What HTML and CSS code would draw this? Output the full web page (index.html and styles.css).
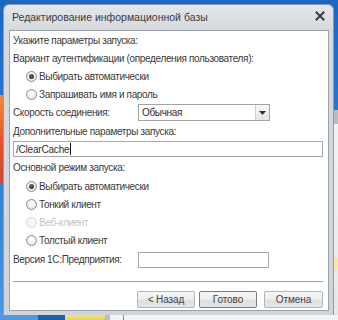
FILE: index.html
```html
<!DOCTYPE html>
<html lang="ru">
<head>
<meta charset="utf-8">
<title>Редактирование информационной базы</title>
<link rel="stylesheet" href="styles.css">
</head>
<body>
<div class="window">
  <div class="titlebar">
    <span class="title">Редактирование информационной базы</span>
    <svg class="close" width="10" height="10" viewBox="0 0 10 10"><path d="M1.5 1.5 L8.5 8.5 M8.5 1.5 L1.5 8.5" stroke="#3a3a3a" stroke-width="2" stroke-linecap="square"/></svg>
  </div>
  <div class="client">
    <div class="row r1">Укажите параметры запуска:</div>
    <div class="row r2">Вариант аутентификации (определения пользователя):</div>
    <div class="row radio-row r3"><span class="radio checked"></span>Выбирать автоматически</div>
    <div class="row radio-row r4"><span class="radio"></span>Запрашивать имя и пароль</div>
    <div class="row field-row r5">
      <span class="field-label">Скорость соединения:</span>
      <div class="select"><span class="select-text">Обычная</span><span class="drop"><svg width="7" height="4" viewBox="0 0 7 4"><path d="M0 0 H7 L3.5 4 Z" fill="#333"/></svg></span></div>
    </div>
    <div class="row r6">Дополнительные параметры запуска:</div>
    <div class="input wide"><span>/ClearCache</span><span class="caret"></span></div>
    <div class="row r8">Основной режим запуска:</div>
    <div class="row radio-row r9"><span class="radio checked"></span>Выбирать автоматически</div>
    <div class="row radio-row r10"><span class="radio"></span>Тонкий клиент</div>
    <div class="row radio-row r11 disabled"><span class="radio"></span>Веб-клиент</div>
    <div class="row radio-row r12"><span class="radio"></span>Толстый клиент</div>
    <div class="row field-row r13">
      <span class="field-label">Версия 1С:Предприятия:</span>
      <div class="input version"></div>
    </div>
    <div class="separator"></div>
    <div class="buttons">
      <button class="btn">&lt; Назад</button>
      <button class="btn default">Готово</button>
      <button class="btn cancel">Отмена</button>
    </div>
  </div>
</div>
</body>
</html>
```
FILE: styles.css
```css
html, body {
  margin: 0;
  padding: 0;
}
body {
  width: 338px;
  height: 320px;
  overflow: hidden;
  font-family: "Liberation Sans", Arial, sans-serif;
  font-size: 10px;
  letter-spacing: -0.35px;
  color: #3a3a3a;
  background:
    linear-gradient(#f3e47a, #e6d25c) 65px 315px / 40px 5px no-repeat,
    linear-gradient(#8a9096, #8a9096) 123px 315px / 1px 5px no-repeat,
    linear-gradient(#b9bec3, #b9bec3) 105px 315px / 5px 5px no-repeat,
    linear-gradient(#f3f4f5, #f3f4f5) 110px 315px / 228px 5px no-repeat,
    linear-gradient(#1c5fae, #1c5fae) 38px 315px / 27px 5px no-repeat,
    linear-gradient(#f4e9a8, #f4e9a8) 334px 257px / 4px 12px no-repeat,
    linear-gradient(#b9bdc2, #b9bdc2) 334px 110px / 4px 14px no-repeat,
    linear-gradient(#f1f2f3, #e6e8ea) 334px 124px / 4px 191px no-repeat,
    linear-gradient(180deg, #f08a3a, #e0502a 60%, #c84a3a) 0 95px / 3px 88px no-repeat,
    linear-gradient(180deg, #1d67c2 0%, #2a78cf 40%, #3d8bd9 80%, #4e9ade 100%);
}

.window {
  box-sizing: border-box;
  width: 331px;
  height: 311px;
  margin: 4px 0 0 3px;
  border: 1px solid #8e9aa6;
  border-bottom: none;
  border-radius: 6px 6px 0 0;
  background: linear-gradient(180deg, #e3e6ea 0px, #d6dadf 25px, #cfd4d9 100%);
  padding: 0 4px 4px 5px;
  display: flex;
  flex-direction: column;
}

.titlebar {
  height: 25px;
  display: flex;
  align-items: center;
  justify-content: space-between;
  padding: 0 4px 0 3px;
  flex-shrink: 0;
}
.title {
  font-size: 10.5px;
  letter-spacing: 0;
  color: #3c3c3c;
  margin-top: -2px;
}
.close {
  margin-top: -3px;
}

.client {
  flex: 1;
  background: #fff;
  border: 1px solid #9ca3aa;
  padding: 0 5px 0 3px;
  display: flex;
  flex-direction: column;
}

.row {
  display: flex;
  align-items: center;
  white-space: nowrap;
}
.r1 { height: 19px; }
.r2 { height: 17px; }
.r3, .r4 { height: 18px; }
.r5 { height: 19px; }
.r6 { height: 19px; }
.r8 { height: 20px; }
.r9, .r10, .r11 { height: 18px; }
.r12 { height: 19px; }
.r13 { height: 19px; }

.radio-row {
  padding-left: 13px;
}
.radio {
  box-sizing: border-box;
  width: 11px;
  height: 11px;
  border-radius: 50%;
  border: 1px solid #8c8c8c;
  background: radial-gradient(circle at 50% 40%, #ffffff 0%, #f0f0f0 50%, #d8d8d8 100%);
  margin-right: 2px;
  display: flex;
  align-items: center;
  justify-content: center;
  flex-shrink: 0;
}
.radio.checked::after {
  content: "";
  width: 5px;
  height: 5px;
  border-radius: 50%;
  background: radial-gradient(circle at 40% 35%, #6a6a6a, #1e1e1e);
}
.disabled {
  color: #c4c4c4;
}
.disabled .radio {
  border-color: #d6d6d6;
  background: #f6f6f6;
}

.field-label {
  width: 125px;
}

.select {
  box-sizing: border-box;
  width: 132px;
  height: 17px;
  border: 1px solid #a3a3a3;
  display: flex;
  align-items: center;
  background: #fff;
}
.select-text {
  flex: 1;
  padding-left: 3px;
  color: #2e2e2e;
}
.drop {
  box-sizing: border-box;
  width: 14px;
  height: 15px;
  border-left: 1px solid #cfcfcf;
  background: linear-gradient(#f8f8f8, #e6e6e6);
  display: flex;
  align-items: center;
  justify-content: center;
}

.input {
  box-sizing: border-box;
  border: 1px solid #a8a8a8;
  background: #fff;
}
.input.wide {
  height: 16px;
  width: 100%;
  display: flex;
  align-items: center;
  padding-left: 2px;
  color: #2e2e2e;
  font-size: 10px;
  letter-spacing: -0.2px;
}
.caret {
  width: 1px;
  height: 12px;
  background: #111;
  margin-left: 1px;
}
.input.version {
  width: 131px;
  height: 16px;
}

.separator {
  height: 1px;
  background: #a0a0a0;
  margin-top: 12px;
}

.buttons {
  display: flex;
  justify-content: flex-end;
  margin-top: 9px;
  gap: 4px;
}
.btn {
  box-sizing: border-box;
  width: 58px;
  height: 17px;
  padding: 0;
  font-family: "Liberation Sans", Arial, sans-serif;
  font-size: 10px;
  letter-spacing: -0.1px;
  color: #444;
  border: 1px solid #b4b4b4;
  border-radius: 2px;
  background: linear-gradient(#f7f7f7 0%, #ececec 50%, #dedede 51%, #e6e6e6 100%);
}
.btn.default {
  border-color: #7a7a7a;
}
.btn.cancel {
  width: 59px;
  margin-left: 3px;
}
```
